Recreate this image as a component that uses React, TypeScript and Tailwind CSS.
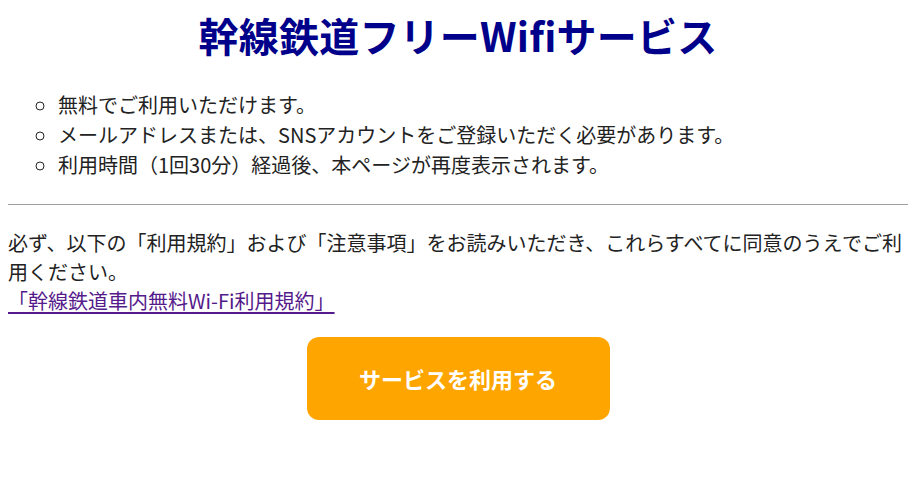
export default function App() {
  const items = [
    '無料でご利用いただけます。',
    'メールアドレスまたは、SNSアカウントをご登録いただく必要があります。',
    '利用時間（1回30分）経過後、本ページが再度表示されます。',
  ];

  return (
    <div className="min-h-screen bg-white px-2 text-[#222] font-['Noto_Sans_CJK_JP','Noto_Sans',sans-serif]">
      <h1 className="mt-[10px] text-center text-[40px] font-bold leading-[50px] tracking-[0.2px] text-[#00008b]">
        幹線鉄道フリーWifiサービス
      </h1>

      <ul className="mt-[30px] list-[circle] pl-[50px] text-[20px] leading-[30px]">
        {items.map((item) => (
          <li key={item}>{item}</li>
        ))}
      </ul>

      <hr className="mt-[24px] border-0 border-t border-[#a0a0a0]" />

      <div className="mt-[23px] text-[20px] leading-[29px]">
        <p>
          必ず、以下の「利用規約」および「注意事項」をお読みいただき、これらすべてに同意のうえでご利用ください。
        </p>
        <a href="#" className="text-[#551a8b] underline underline-offset-[3px]">
          「幹線鉄道車内無料Wi-Fi利用規約」
        </a>
      </div>

      <button
        type="button"
        className="mx-auto mt-[22px] flex h-[83px] w-[303px] items-center justify-center rounded-[12px] bg-[#ffa500] text-[22px] font-bold text-white"
      >
        サービスを利用する
      </button>
    </div>
  );
}
